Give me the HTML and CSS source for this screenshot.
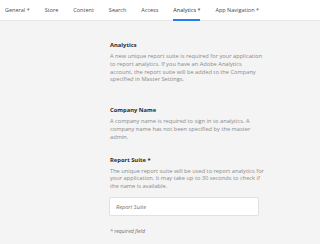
FILE: index.html
```html
<!DOCTYPE html>
<html lang="en">
<head>
  <meta charset="UTF-8" />
  <title>Analytics | App Settings</title>
  <link rel="stylesheet" href="styles.css">
</head>
<body>
  <nav class="tabs">
    <a href="#" class="tab">General *</a>
    <a href="#" class="tab">Store</a>
    <a href="#" class="tab">Content</a>
    <a href="#" class="tab">Search</a>
    <a href="#" class="tab">Access</a>
    <a href="#" class="tab tab-active">Analytics *</a>
    <a href="#" class="tab">App Navigation *</a>
  </nav>

  <main class="panel">
    <section class="group group-analytics">
      <h3>Analytics</h3>
      <p>A new unique report suite is required for your application<br>
      to report analytics. If you have an Adobe Analytics<br>
      account, the report suite will be added to the Company<br>
      specified in Master Settings.</p>
    </section>

    <section class="group">
      <h3>Company Name</h3>
      <p>A company name is required to sign in to analytics. A<br>
      company name has not been specified by the master<br>
      admin.</p>
    </section>

    <section class="group">
      <h3>Report Suite *</h3>
      <p>The unique report suite will be used to report analytics for<br>
      your application. It may take up to 30 seconds to check if<br>
      the name is available.</p>
      <input class="text-input" type="text" placeholder="Report Suite" />
    </section>

    <div class="required-note">* required field</div>
  </main>
</body>
</html>
```

FILE: styles.css
```css
body {
  margin: 0;
  font-family: 'Open Sans', sans-serif;
  background-color: #F4F4F4;
  color: #2C2C2C;
}
.tabs {
  display: flex;
  gap: 15px;
  height: 20px;
  padding-left: 5px;
  background: white;
  border-bottom: 1px solid #E6E6E6;
}
.tab {
  font-size: 5.5px;
  line-height: 20px;
  color: #4B4B4B;
  text-decoration: none;
  border-bottom: 2px solid transparent;
  margin-bottom: -1px;
}
.tab-active {
  color: #2C2C2C;
  border-bottom-color: #2680EB;
}
.panel {
  width: 160px;
  margin-left: 110px;
  padding-top: 20px;
}
.group {
  margin-bottom: 14px;
}
.group-analytics {
  margin-bottom: 22px;
}
.group h3 {
  margin: 0 0 4px;
  font-size: 5.8px;
  font-weight: 700;
  line-height: 8px;
}
.group p {
  margin: 0;
  font-size: 5.7px;
  line-height: 7.8px;
  color: #8A8A8A;
  white-space: nowrap;
}
.text-input {
  display: block;
  box-sizing: border-box;
  width: 150px;
  height: 19px;
  margin: 6.5px 0 0 -1px;
  padding: 0 6px;
  border: 1px solid #E1E1E1;
  border-radius: 1px;
  background: white;
  font-family: 'Open Sans', sans-serif;
  font-size: 5.6px;
  font-style: italic;
}
.text-input::placeholder {
  color: #6E6E6E;
}
.required-note {
  margin-top: -3px;
  font-size: 5.2px;
  line-height: 8px;
  font-style: italic;
  color: #6E6E6E;
}
```
